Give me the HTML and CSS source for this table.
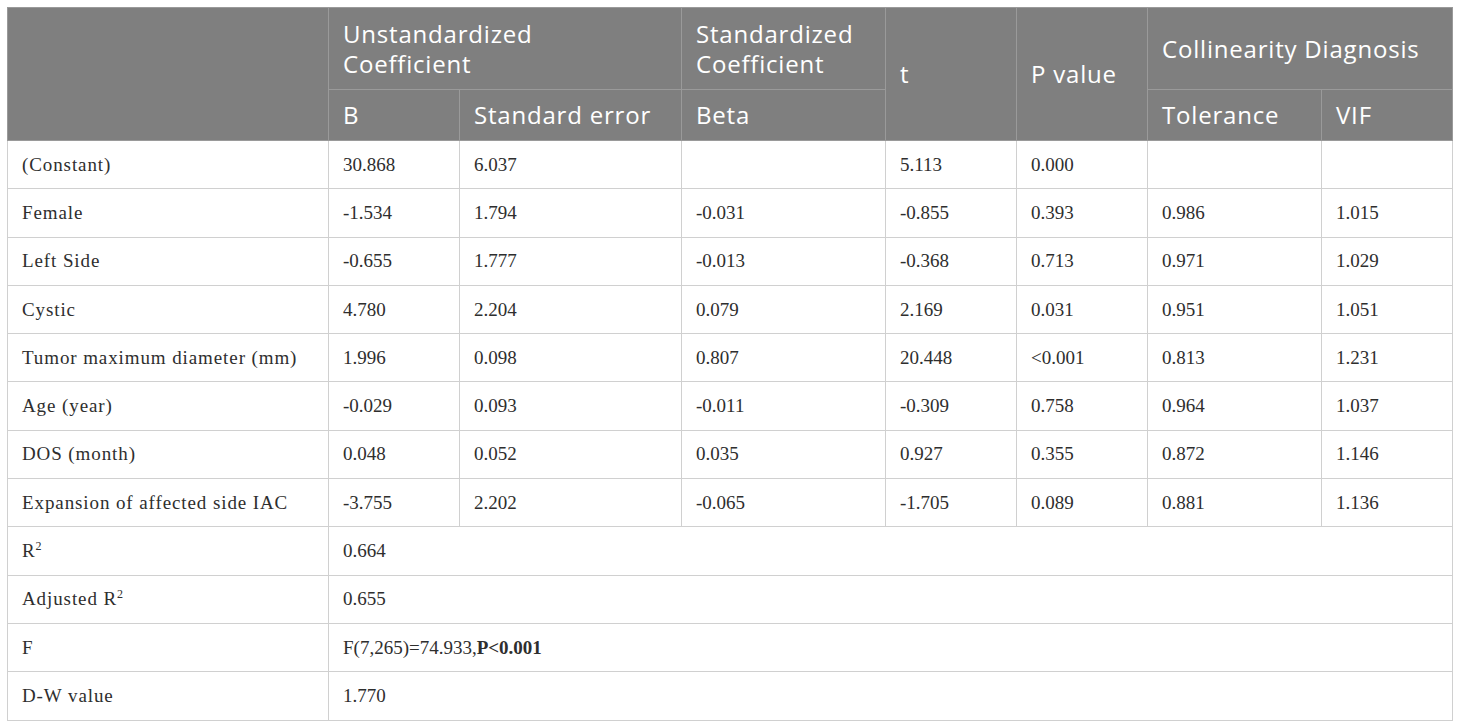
FILE: index.html
```html
<!DOCTYPE html>
<html>
<head>
<meta charset="utf-8">
<link rel="stylesheet" href="styles.css">
</head>
<body>
<table class="tbl">
  <colgroup>
    <col class="c0"><col class="c1"><col class="c2"><col class="c3"><col class="c4"><col class="c5"><col class="c6"><col class="c7">
  </colgroup>
  <thead>
    <tr class="h1">
      <th rowspan="2"></th>
      <th colspan="2" class="top">Unstandardized<br>Coefficient</th>
      <th class="top">Standardized<br>Coefficient</th>
      <th rowspan="2">t</th>
      <th rowspan="2">P value</th>
      <th colspan="2">Collinearity Diagnosis</th>
    </tr>
    <tr class="h2">
      <th>B</th>
      <th>Standard error</th>
      <th>Beta</th>
      <th>Tolerance</th>
      <th>VIF</th>
    </tr>
  </thead>
  <tbody>
    <tr><td class="lbl">(Constant)</td><td>30.868</td><td>6.037</td><td></td><td>5.113</td><td>0.000</td><td></td><td></td></tr>
    <tr><td class="lbl">Female</td><td>-1.534</td><td>1.794</td><td>-0.031</td><td>-0.855</td><td>0.393</td><td>0.986</td><td>1.015</td></tr>
    <tr><td class="lbl">Left Side</td><td>-0.655</td><td>1.777</td><td>-0.013</td><td>-0.368</td><td>0.713</td><td>0.971</td><td>1.029</td></tr>
    <tr><td class="lbl">Cystic</td><td>4.780</td><td>2.204</td><td>0.079</td><td>2.169</td><td>0.031</td><td>0.951</td><td>1.051</td></tr>
    <tr><td class="lbl">Tumor maximum diameter (mm)</td><td>1.996</td><td>0.098</td><td>0.807</td><td>20.448</td><td>&lt;0.001</td><td>0.813</td><td>1.231</td></tr>
    <tr><td class="lbl">Age (year)</td><td>-0.029</td><td>0.093</td><td>-0.011</td><td>-0.309</td><td>0.758</td><td>0.964</td><td>1.037</td></tr>
    <tr><td class="lbl">DOS (month)</td><td>0.048</td><td>0.052</td><td>0.035</td><td>0.927</td><td>0.355</td><td>0.872</td><td>1.146</td></tr>
    <tr><td class="lbl">Expansion of affected side IAC</td><td>-3.755</td><td>2.202</td><td>-0.065</td><td>-1.705</td><td>0.089</td><td>0.881</td><td>1.136</td></tr>
    <tr><td class="lbl">R<sup>2</sup></td><td colspan="7">0.664</td></tr>
    <tr><td class="lbl">Adjusted R<sup>2</sup></td><td colspan="7">0.655</td></tr>
    <tr><td class="lbl">F</td><td colspan="7">F(7,265)=74.933,<b>P&lt;0.001</b></td></tr>
    <tr><td class="lbl">D-W value</td><td colspan="7">1.770</td></tr>
  </tbody>
</table>
</body>
</html>
```
FILE: styles.css
```css
html, body {
  margin: 0;
  padding: 0;
  background: #ffffff;
}
body {
  padding: 7px 8px 7px 7px;
}
.tbl {
  border-collapse: collapse;
  table-layout: fixed;
  width: 1446px;
}
.c0 { width: 321px; }
.c1 { width: 131px; }
.c2 { width: 222px; }
.c3 { width: 204px; }
.c4 { width: 131px; }
.c5 { width: 131px; }
.c6 { width: 174px; }
.c7 { width: 131px; }

.tbl th {
  background: #7f7f7f;
  color: #ffffff;
  font-family: "Open Sans", "Lato", sans-serif;
  font-weight: 400;
  font-size: 24px;
  letter-spacing: 0.8px;
  line-height: 30px;
  text-align: left;
  vertical-align: middle;
  padding: 0 14px 0 14px;
  border: 1px solid #9a9a9a;
  white-space: nowrap;
}
.tbl th.top {
  vertical-align: top;
  padding-top: 11px;
}
.tbl .h1 { height: 82px; }
.tbl .h2 { height: 51px; }

.tbl td {
  font-family: "Liberation Serif", "Times New Roman", serif;
  font-size: 19px;
  color: #2e2e2e;
  height: 47.3px;
  padding: 0 14px;
  border: 1px solid #d0d0d0;
  vertical-align: middle;
  white-space: nowrap;
}
.tbl td.lbl {
  letter-spacing: 0.9px;
}
.tbl td sup {
  font-size: 12px;
  line-height: 0;
  vertical-align: 7px;
}
.tbl td b {
  font-weight: 700;
}
```
